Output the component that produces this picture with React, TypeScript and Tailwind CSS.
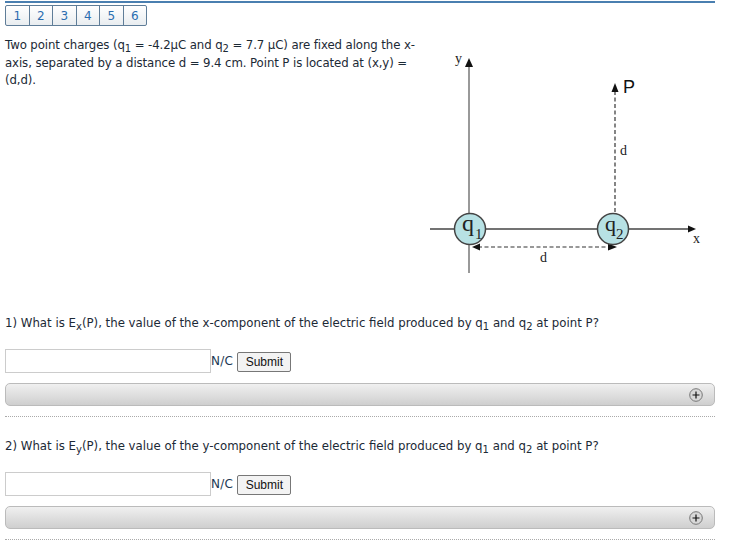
const font = "font-['DejaVu_Sans',sans-serif]";

function Tabs() {
  return (
    <div className="flex h-[21px] w-[142px] rounded-[2px] border border-[#5f7d98] bg-gradient-to-b from-white to-[#e9edf0]">
      {[1, 2, 3, 4, 5, 6].map((n, i) => (
        <div key={n} className={`flex flex-1 items-center justify-center text-[12px] text-[#2a6db0] ${i > 0 ? "border-l border-[#5f7d98]" : ""}`}>
          {n}
        </div>
      ))}
    </div>
  );
}

function Diagram() {
  const serif = "'Liberation Serif', serif";
  return (
    <svg width="290" height="240" viewBox="0 0 290 240" className="shrink-0">
      <line x1="39" y1="24" x2="39" y2="232" stroke="#777" strokeWidth="1.5" />
      <polygon points="39,17 35,26 43,26" fill="#111" />
      <text x="25" y="22" fontFamily={serif} fontSize="14" fill="#222">y</text>
      <line x1="0" y1="188" x2="260" y2="188" stroke="#444" strokeWidth="1.3" />
      <polygon points="266,188 258,184.500 258,191.500" fill="#111" />
      <text x="263" y="202" fontFamily={serif} fontSize="14" fill="#222">x</text>
      <line x1="185" y1="50" x2="185" y2="173" stroke="#444" strokeWidth="1.3" strokeDasharray="4 2.500" />
      <polygon points="185,42 181.500,51 188.500,51" fill="#111" />
      <text x="193" y="52" fontFamily="'Liberation Sans', sans-serif" fontSize="18" fill="#111">P</text>
      <text x="190" y="114" fontFamily={serif} fontSize="14" fill="#222">d</text>
      <line x1="48" y1="206" x2="180" y2="206" stroke="#333" strokeWidth="1.2" strokeDasharray="4 2.500" />
      <polygon points="42,206 50,202.500 50,209.500" fill="#111" />
      <polygon points="187,206 178,202.500 178,209.500" fill="#111" />
      <text x="110" y="221" fontFamily={serif} fontSize="14" fill="#222">d</text>
      <circle cx="40" cy="188" r="15.500" fill="#b7e1e4" stroke="#444" strokeWidth="1.5" />
      <circle cx="183" cy="188" r="15.500" fill="#b7e1e4" stroke="#444" strokeWidth="1.5" />
      <text x="32" y="190" fontFamily={serif} fontSize="24" fill="#222">q</text>
      <text x="45" y="198" fontFamily={serif} fontSize="15" fill="#222">1</text>
      <text x="175" y="190" fontFamily={serif} fontSize="22" fill="#222">q</text>
      <text x="186" y="198" fontFamily={serif} fontSize="15" fill="#222">2</text>
    </svg>
  );
}

function Sub({ c }: { c: string }) {
  return <sub className="text-[10px] leading-none align-[-3px] bottom-0">{c}</sub>;
}

function Answer() {
  return (
    <div className="flex h-6 items-center">
      <div className="h-6 w-[206px] border border-[#cccccc] bg-white" />
      <span className="text-[12px] tracking-[0.3px] text-[#1c3a55]">N/C</span>
      <button className="mt-[2px] ml-1 h-5 w-[54px] rounded-[2px] border border-[#777] bg-[#f3f3f3] font-['Liberation_Sans',sans-serif] text-[12px] text-[#111]">
        Submit
      </button>
    </div>
  );
}

function Bar() {
  return (
    <div className="flex h-[23px] w-[710px] items-center justify-end rounded-[5px] border border-[#bbbbbb] bg-gradient-to-b from-[#f0f0f0] to-[#cfcfcf] pr-[11px]">
      <svg width="14" height="14" viewBox="0 0 14 14">
        <circle cx="7" cy="7" r="6.300" fill="#d8d8d8" stroke="#777" />
        <path d="M3.500 7h7M7 3.500v7" stroke="#111" strokeWidth="1.200" />
      </svg>
    </div>
  );
}

export default function App() {
  return (
    <div className={`h-[550px] w-[747px] overflow-hidden bg-white ${font} text-[11.750px] text-[#1c2a36]`}>
      <div className="mt-px ml-[5px] w-[710px] border-t-2 border-[#4a7fb0]" />
      <div className="mt-[2px] pl-[5px]">
        <Tabs />
      </div>
      <div className="flex">
        <div className="w-[430px] whitespace-nowrap pt-[11px] pl-[5px] leading-[17.500px] tracking-[-0.1px]">
          Two point charges (q<Sub c="1" /> = -4.2μC and q<Sub c="2" /> = 7.7 μC) are fixed along the x-<br />
          axis, separated by a distance d = 9.4 cm. Point P is located at (x,y) =<br />
          (d,d).
        </div>
        <div className="pt-[15px]">
          <Diagram />
        </div>
      </div>
      <div className="mt-[34px] pl-[5px] leading-[17px]">
        1) What is E<Sub c="x" />(P), the value of the x-component of the electric field produced by q<Sub c="1" /> and q<Sub c="2" /> at point P?
      </div>
      <div className="mt-[17px] pl-[5px]"><Answer /></div>
      <div className="mt-[10px] pl-[5px]"><Bar /></div>
      <div className="mt-[10px] ml-[5px] w-[710px] border-t border-dotted border-[#aaaaaa]" />
      <div className="mt-[21px] pl-[5px] leading-[17px]">
        2) What is E<Sub c="y" />(P), the value of the y-component of the electric field produced by q<Sub c="1" /> and q<Sub c="2" /> at point P?
      </div>
      <div className="mt-[17px] pl-[5px]"><Answer /></div>
      <div className="mt-[10px] pl-[5px]"><Bar /></div>
      <div className="mt-[10px] ml-[5px] w-[710px] border-t border-dotted border-[#aaaaaa]" />
    </div>
  );
}
